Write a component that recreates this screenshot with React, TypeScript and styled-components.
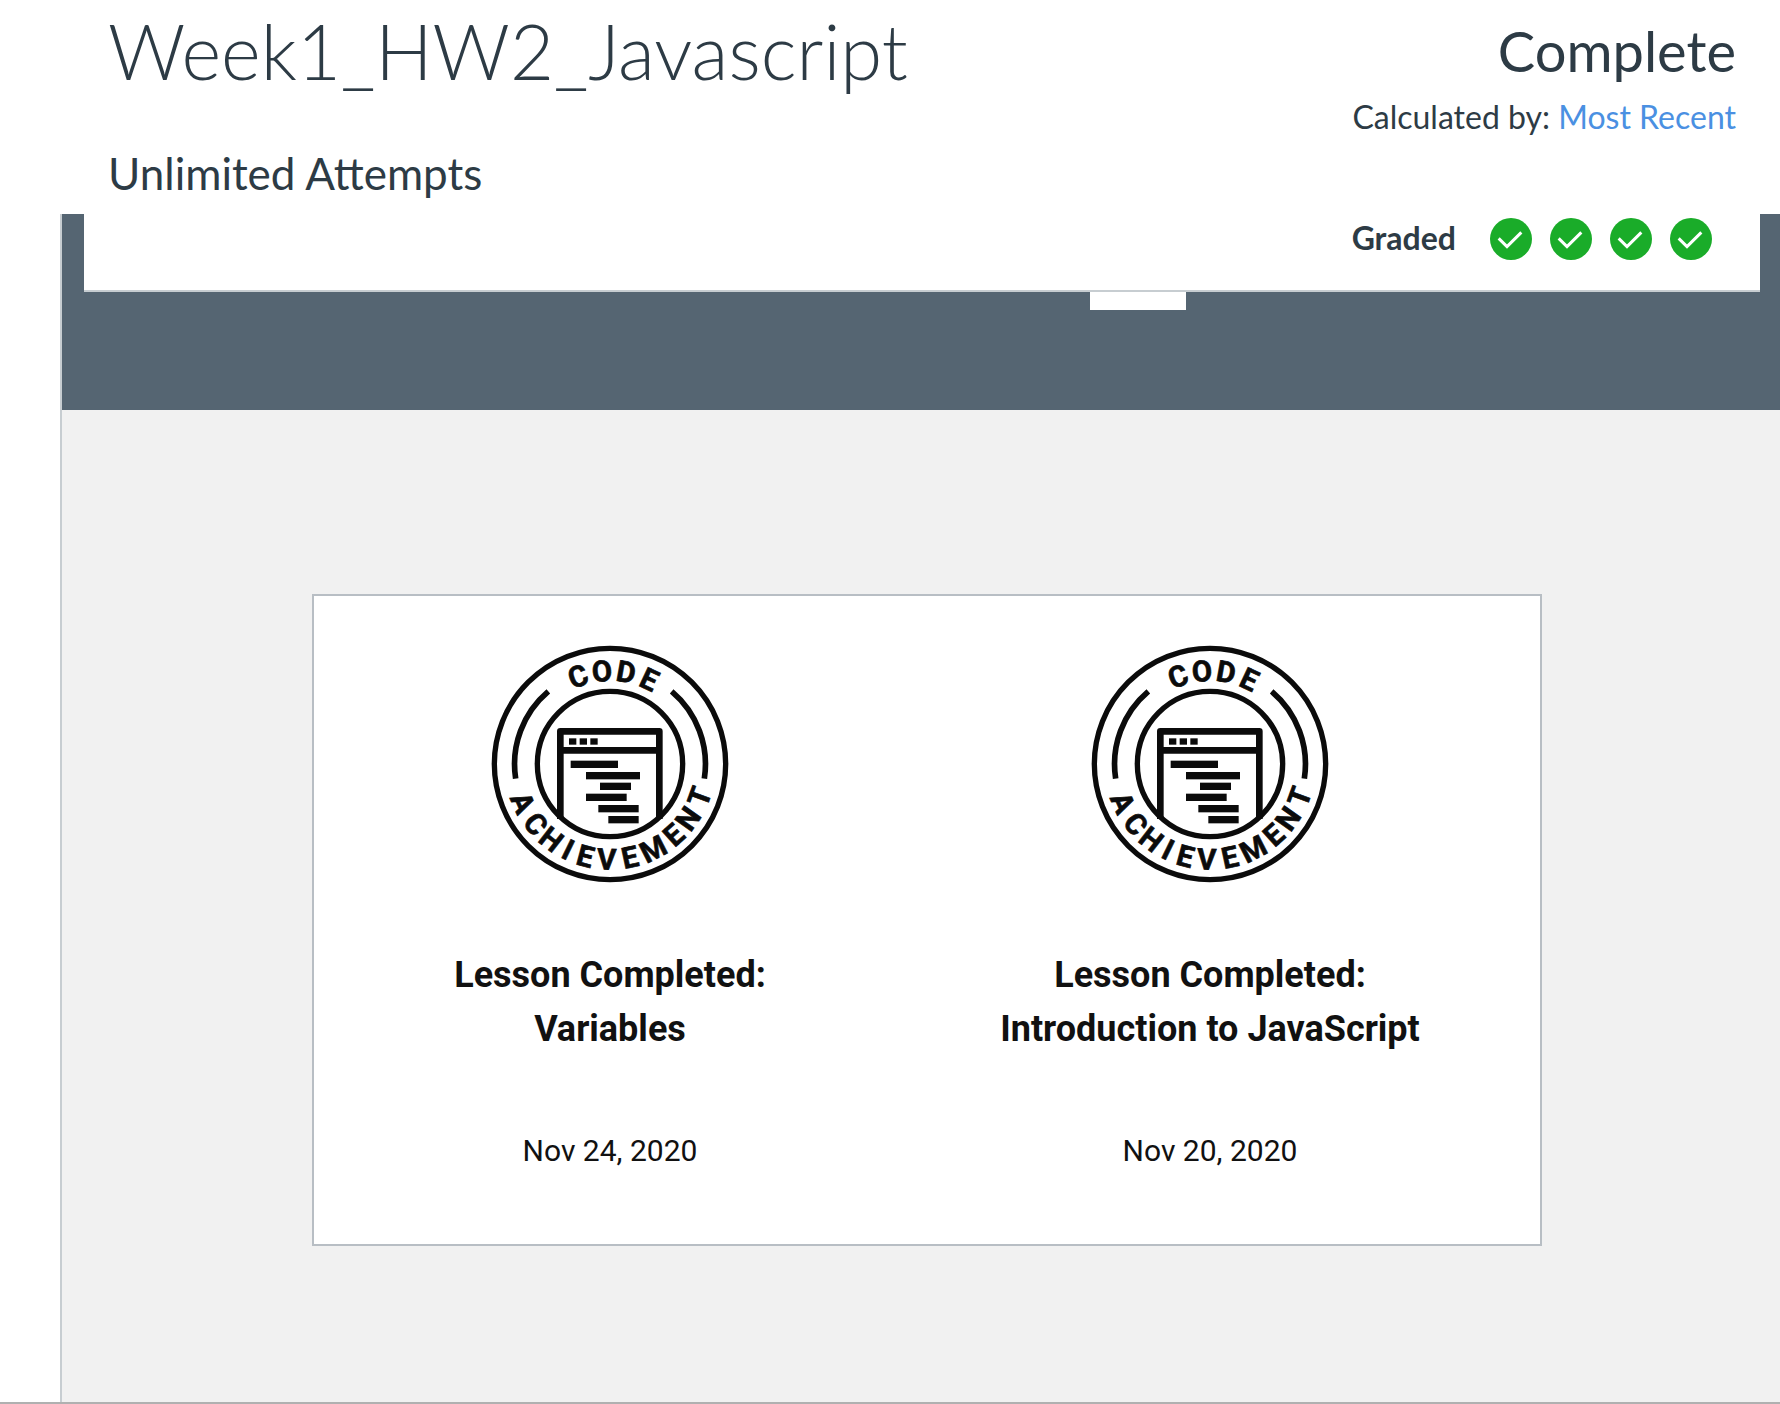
import React from "react";
import styled, { createGlobalStyle } from "styled-components";

const GlobalStyle = createGlobalStyle`
  *, *::before, *::after { box-sizing: border-box; }
  body {
    margin: 0;
    background: #ffffff;
    color: #2d3b45;
    font-family: Lato, "Liberation Sans", sans-serif;
  }
  h1, h2, h3, p, ul { margin: 0; padding: 0; }
`;

const Page = styled.div`
  min-height: 100vh;
  display: flex;
  flex-direction: column;
  border-bottom: 2px solid #b0b0b0;
`;

const Header = styled.header`
  display: flex;
  justify-content: space-between;
  align-items: flex-start;
  gap: 40px;
  padding: 5px 44px 15px 108px;
`;

const Heading = styled.div`
  display: flex;
  flex-direction: column;
  gap: 50px;
`;

const Title = styled.h1`
  font-size: 76px;
  line-height: 92px;
  font-weight: 300;
`;

const Attempts = styled.p`
  font-size: 44px;
  line-height: 52px;
`;

const Score = styled.div`
  display: flex;
  flex-direction: column;
  gap: 12px;
  padding-top: 12px;
  text-align: right;
`;

const ScoreStatus = styled.p`
  font-size: 56px;
  line-height: 68px;
`;

const ScoreMethod = styled.p`
  font-size: 32px;
  line-height: 40px;
`;

const MethodLink = styled.a`
  color: #4a90e2;
  text-decoration: none;
`;

const Content = styled.main`
  flex: 1;
  display: flex;
  flex-direction: column;
  margin-left: 60px;
  border-left: 2px solid #c7cdd1;
  background: #f1f1f1;
`;

const Band = styled.section`
  padding: 0 20px 100px 22px;
  background: #556572;
`;

const GradePanel = styled.div`
  display: flex;
  justify-content: flex-end;
  align-items: flex-start;
  gap: 34px;
  padding: 4px 48px 30px;
  border-bottom: 2px solid #c7cdd1;
  background: #ffffff;
`;

const GradeLabel = styled.h2`
  font-size: 32px;
  line-height: 40px;
  font-weight: 700;
`;

const GradeList = styled.ul`
  display: flex;
  gap: 18px;
  list-style: none;
`;

const GradeItem = styled.li`
  display: flex;
`;

const PanelTab = styled.div`
  width: 96px;
  height: 18px;
  margin-left: 60%;
  background: #ffffff;
`;

const Preview = styled.section`
  flex: 1;
  display: flex;
  padding: 184px 238px 156px 250px;
`;

const Card = styled.div`
  flex: 1;
  display: grid;
  grid-template-columns: 1fr 1fr;
  column-gap: 8px;
  align-items: start;
  padding: 48px 34px 70px 0;
  border: 2px solid #b8bec4;
  background: #ffffff;
`;

const Lesson = styled.article`
  display: flex;
  flex-direction: column;
  align-items: center;
  text-align: center;
  color: #111111;
  font-family: Roboto, "Liberation Sans", sans-serif;
`;

const LessonTitle = styled.h3`
  margin-top: 64px;
  font-size: 36px;
  line-height: 54px;
  font-weight: 700;
`;

const LessonDate = styled.p`
  margin-top: 76px;
  font-size: 30px;
  line-height: 38px;
`;

function CheckBadge() {
  return (
    <svg width="42" height="42" viewBox="0 0 126 126" role="img" aria-label="Graded attempt">
      <circle cx="63" cy="63" r="63" fill="#1aac29" />
      <path d="M26 61 L51 86 L94 43" fill="none" stroke="#ffffff" strokeWidth="9" />
    </svg>
  );
}

const CX = 390;
const CY = 401;

const topLetters: [string, number][] = [
  ["C", -20],
  ["O", -5],
  ["D", 10],
  ["E", 25],
];

// Angles are measured from straight down, positive towards the right.
const bottomLetters: [string, number][] = [
  ["A", -66],
  ["C", -51],
  ["H", -38],
  ["I", -26],
  ["E", -15],
  ["V", -2],
  ["E", 12],
  ["M", 27],
  ["E", 42],
  ["N", 55],
  ["T", 70],
];

const codeLines = [
  [272, 391, 142],
  [318, 425, 162],
  [360, 457, 93],
  [318, 490, 122],
  [355, 524, 121],
  [385, 557, 91],
];

const BadgeLetter = styled.text`
  font-family: Roboto, "Liberation Sans", sans-serif;
  font-size: 88px;
  font-weight: 700;
  text-anchor: middle;
  stroke: #0b0b0b;
  stroke-width: 2px;
`;

function AchievementBadge() {
  return (
    <svg width="240" height="240" viewBox="30 41 720 720" fill="#0b0b0b" role="img" aria-label="Code achievement">
      <g fill="none" stroke="#0b0b0b">
        <circle cx={CX} cy={CY} r="347" strokeWidth="16" />
        <circle cx={CX} cy={CY} r="218" strokeWidth="16" />
        <path d="M205 183 A286 286 0 0 0 107 445" strokeWidth="17" />
        <path d="M575 183 A286 286 0 0 1 673 445" strokeWidth="17" />
        <path d="M241 566 V303 H538 V566 M241 360 H538" strokeWidth="20" strokeLinejoin="round" />
      </g>
      {[267, 299, 331].map((x) => (
        <rect key={x} x={x} y="324" width="22" height="19" />
      ))}
      {codeLines.map(([x, y, width]) => (
        <rect key={y} x={x} y={y} width={width} height="22" />
      ))}
      {topLetters.map(([letter, angle]) => (
        <BadgeLetter key={angle} x={CX} y={CY - 249} transform={`rotate(${angle} ${CX} ${CY})`}>
          {letter}
        </BadgeLetter>
      ))}
      {bottomLetters.map(([letter, angle]) => (
        <BadgeLetter key={angle} x={CX} y={CY + 317} transform={`rotate(${-angle} ${CX} ${CY})`}>
          {letter}
        </BadgeLetter>
      ))}
    </svg>
  );
}

const lessons = [
  { name: "Variables", date: "Nov 24, 2020" },
  { name: "Introduction to JavaScript", date: "Nov 20, 2020" },
];

const attempts = [1, 2, 3, 4];

export default function App() {
  return (
    <>
      <GlobalStyle />
      <Page>
        <Header>
          <Heading>
            <Title>Week1_HW2_Javascript</Title>
            <Attempts>Unlimited Attempts</Attempts>
          </Heading>
          <Score>
            <ScoreStatus>Complete</ScoreStatus>
            <ScoreMethod>
              Calculated by: <MethodLink href="#most-recent">Most Recent</MethodLink>
            </ScoreMethod>
          </Score>
        </Header>
        <Content>
          <Band>
            <GradePanel>
              <GradeLabel>Graded</GradeLabel>
              <GradeList>
                {attempts.map((attempt) => (
                  <GradeItem key={attempt}>
                    <CheckBadge />
                  </GradeItem>
                ))}
              </GradeList>
            </GradePanel>
            <PanelTab />
          </Band>
          <Preview>
            <Card>
              {lessons.map((lesson) => (
                <Lesson key={lesson.name}>
                  <AchievementBadge />
                  <LessonTitle>
                    Lesson Completed:
                    <br />
                    {lesson.name}
                  </LessonTitle>
                  <LessonDate>{lesson.date}</LessonDate>
                </Lesson>
              ))}
            </Card>
          </Preview>
        </Content>
      </Page>
    </>
  );
}
